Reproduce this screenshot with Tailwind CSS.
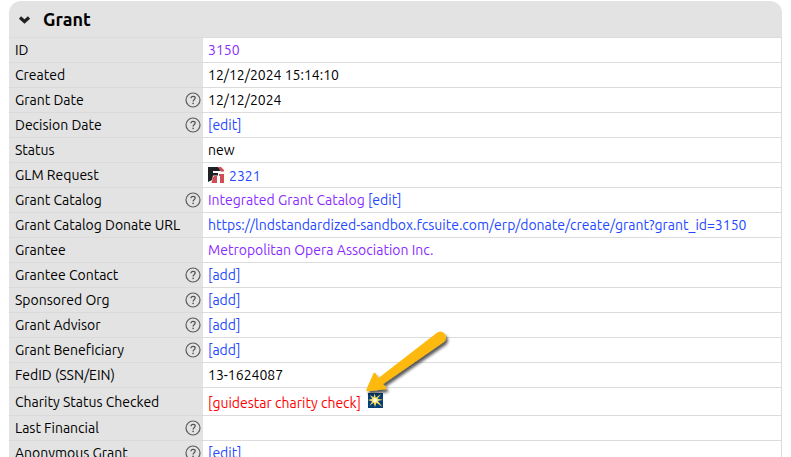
<!DOCTYPE html>
<html lang="en">
<head>
<meta charset="utf-8">
<title>Grant</title>
<script src="https://cdn.jsdelivr.net/npm/@tailwindcss/browser@4"></script>
</head>
<body class="h-screen overflow-hidden bg-white px-[9px] pt-px font-[Ubuntu,'Noto_Sans',sans-serif] text-sm leading-5 text-black">
<svg class="hidden" aria-hidden="true">
  <symbol id="help" viewBox="0 0 16 16">
    <circle cx="8" cy="8" r="7" fill="none" stroke="#5c5c5c" stroke-width="1.200"/>
    <path d="M5.900 6.300C6 4.900 6.900 4.300 8.100 4.300c1.200 0 2.100.7 2.100 1.800 0 1.700-2.100 1.700-2.100 3.300" fill="none" stroke="#505050" stroke-width="1.200"/>
    <circle cx="8.100" cy="11.400" r=".8" fill="#505050"/>
  </symbol>
</svg>
<section>
  <h2 class="rounded-t-xl bg-[#e3e3e3]">
    <button class="flex h-9 w-full items-center gap-3 px-2 text-left text-lg font-semibold" aria-expanded="true">
      <svg class="h-4 w-[14px]" viewBox="0 0 14 16" aria-hidden="true"><path d="M3 6.500 7.500 10.500 12 6.500" fill="none" stroke="#222" stroke-width="3.200"/></svg>
      Grant
    </button>
  </h2>
  <table class="w-full table-fixed border-separate border-spacing-0 border-t border-r border-[#dcdcdc] [&_td]:h-[25px] [&_td]:border-b [&_td]:border-[#dcdcdc] [&_td]:py-0 [&_td]:pl-[5px] [&_td]:whitespace-nowrap [&_th]:h-[25px] [&_th]:border-b [&_th]:border-[#dadada] [&_th]:bg-[#e3e3e3] [&_th]:py-0 [&_th]:pr-0.5 [&_th]:pl-1.5 [&_th]:text-left [&_th]:font-normal [&_th]:whitespace-nowrap [&_th>div]:flex [&_th>div]:items-center [&_th>div]:justify-between [&_button_svg]:block [&_button_svg]:size-4">
    <colgroup><col class="w-[194px]"><col></colgroup>
    <tbody>
      <tr><th scope="row">ID</th><td><a href="#" class="text-[#8a2bff]">3150</a></td></tr>
      <tr><th scope="row">Created</th><td>12/12/2024 15:14:10</td></tr>
      <tr><th scope="row"><div>Grant Date <button aria-label="Help: Grant Date"><svg><use href="#help"/></svg></button></div></th><td>12/12/2024</td></tr>
      <tr><th scope="row"><div>Decision Date <button aria-label="Help: Decision Date"><svg><use href="#help"/></svg></button></div></th><td><a href="#" class="text-[#2348ff]">[edit]</a></td></tr>
      <tr><th scope="row">Status</th><td>new</td></tr>
      <tr><th scope="row">GLM Request</th><td><div class="flex items-center gap-[5px]">
        <svg class="size-4" viewBox="0 0 16 16" aria-hidden="true"><path d="M0 0H10L13 4H5V6H10V8.500H5L4 13 0 15Z" fill="#202124"/><path d="M10 0H13L16 3V4.500H13ZM5 10 6.500 9H9V16H3.500ZM11 7H16V16H12V9H11Z" fill="#cf4d57"/></svg>
        <a href="#" class="pt-0.5 text-[#2348ff]">2321</a></div></td></tr>
      <tr><th scope="row"><div>Grant Catalog <button aria-label="Help: Grant Catalog"><svg><use href="#help"/></svg></button></div></th><td><a href="#" class="text-[#8a2bff]">Integrated Grant Catalog</a> <a href="#" class="text-[#2348ff]">[edit]</a></td></tr>
      <tr><th scope="row">Grant Catalog Donate URL</th><td><a href="#" class="text-[#2348ff]">https://lndstandardized-sandbox.fcsuite.com/erp/donate/create/grant?grant_id=3150</a></td></tr>
      <tr><th scope="row">Grantee</th><td><a href="#" class="text-[#8a2bff]">Metropolitan Opera Association Inc.</a></td></tr>
      <tr><th scope="row"><div>Grantee Contact <button aria-label="Help: Grantee Contact"><svg><use href="#help"/></svg></button></div></th><td><a href="#" class="text-[#2348ff]">[add]</a></td></tr>
      <tr><th scope="row"><div>Sponsored Org <button aria-label="Help: Sponsored Org"><svg><use href="#help"/></svg></button></div></th><td><a href="#" class="text-[#2348ff]">[add]</a></td></tr>
      <tr><th scope="row"><div>Grant Advisor <button aria-label="Help: Grant Advisor"><svg><use href="#help"/></svg></button></div></th><td><a href="#" class="text-[#2348ff]">[add]</a></td></tr>
      <tr><th scope="row"><div>Grant Beneficiary <button aria-label="Help: Grant Beneficiary"><svg><use href="#help"/></svg></button></div></th><td><a href="#" class="text-[#2348ff]">[add]</a></td></tr>
      <tr><th scope="row">FedID (SSN/EIN)</th><td>13-1624087</td></tr>
      <tr><th scope="row">Charity Status Checked</th><td class="h-7!"><div class="flex items-start gap-[7px]">
        <a href="#" class="pt-0.5 text-[#f00]">[guidestar charity check]</a>
        <span class="relative mt-0.5 block size-[15px]">
          <svg class="size-[15px]" viewBox="0 0 16 16" aria-hidden="true"><path d="M0 0H16V16H0Z" fill="#063f78"/><path d="M7 0 8.300 5 14 1 10 6 16 7.200 10.500 8.500 15.500 15 9 10.500 7.500 15 6 10.500 1.500 13.500 4.500 9 0 7.500 4.500 6 2 2 6 4.500Z" fill="#f5dc62"/><circle cx="7.500" cy="7.500" r="2.300" fill="#fffbe0"/></svg>
          <svg class="absolute -top-[66px] -left-1 h-[72px] w-[90px] max-w-none overflow-visible" viewBox="0 0 90 72" aria-hidden="true">
            <defs><filter id="shade" x="-20%" y="-20%" width="140%" height="140%"><feDropShadow dx="2" dy="3" stdDeviation="1.500" flood-color="#000" flood-opacity=".65"/></filter></defs>
            <path d="M3.500 63 10.500 47 14 53 74 6.500C79 4 83 10 79 14L17 57 21 61Z" fill="#fdb90b" stroke="#fdb90b" stroke-width="2.500" stroke-linejoin="round" filter="url(#shade)"/>
          </svg>
        </span></div></td></tr>
      <tr><th scope="row"><div>Last Financial <button aria-label="Help: Last Financial"><svg><use href="#help"/></svg></button></div></th><td></td></tr>
      <tr><th scope="row"><div>Anonymous Grant <button aria-label="Help: Anonymous Grant"><svg><use href="#help"/></svg></button></div></th><td><a href="#" class="text-[#2348ff]">[edit]</a></td></tr>
    </tbody>
  </table>
</section>
</body>
</html>
